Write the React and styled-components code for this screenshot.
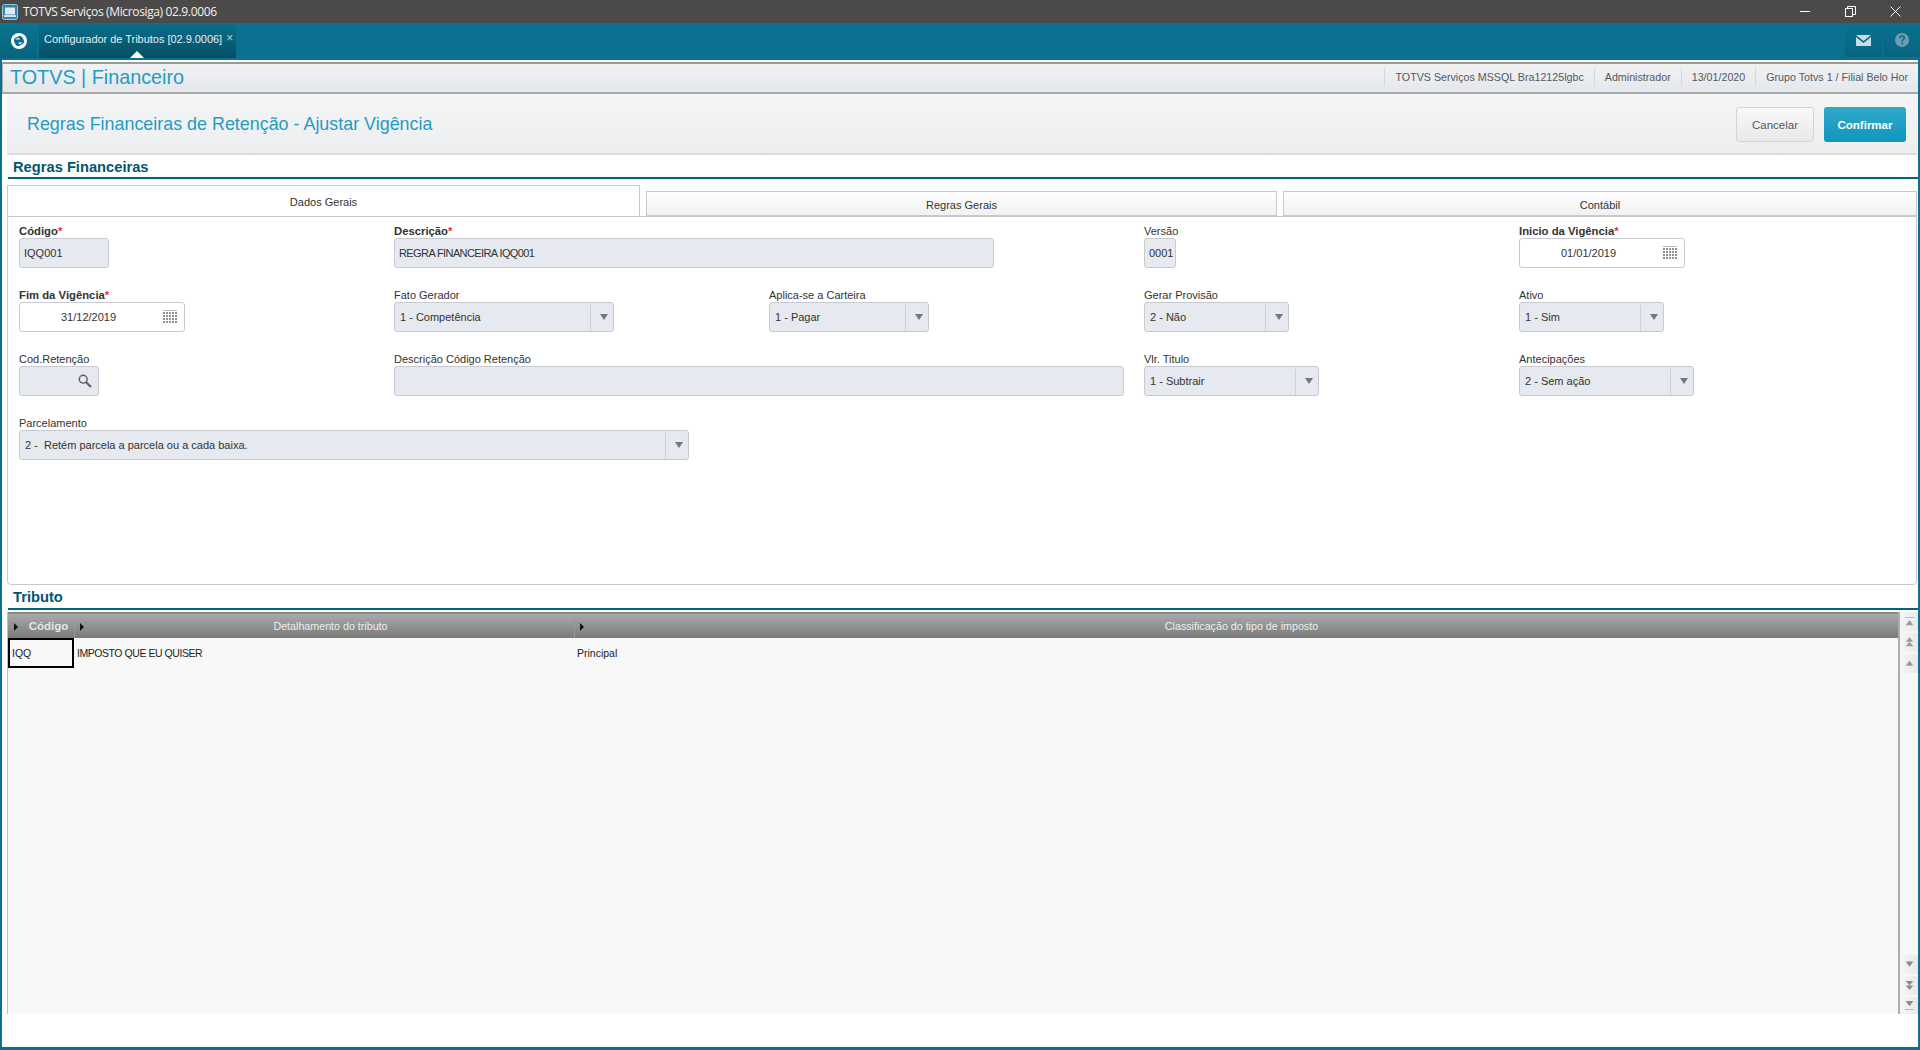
import React from 'react';
import styled, { createGlobalStyle } from 'styled-components';

const Global = createGlobalStyle`
  html, body { margin: 0; padding: 0; background: #fff; }
  body { font-family: "Liberation Sans", Arial, sans-serif; overflow: hidden; }
  * { box-sizing: border-box; }
`;

const Shell = styled.div`
  width: 1920px; height: 1050px; display: flex; flex-direction: column; background: #fff;
`;
const TitleBar = styled.div`
  height: 23px; flex: none; background: #4c4a48; display: flex; align-items: center; padding-left: 2px;
`;
const WinTitle = styled.span`
  margin-left: 5px; flex: 1; color: #f2f2f2; font: 12px "Open Sans", sans-serif; letter-spacing: -.36px;
`;
const WinButton = styled.div`
  width: 15px; height: 15px; display: flex; align-items: center; justify-content: center; margin-right: 30px;
  &:last-child { margin-right: 17px; }
`;
const TopBar = styled.div`
  height: 37px; flex: none; background: #0b7190; display: flex; align-items: flex-start;
`;
const LogoBtn = styled.div`
  width: 37px; height: 35px; display: flex; align-items: center; justify-content: center;
  background: linear-gradient(#0a7592, #08637d);
`;
const AppTab = styled.div`
  position: relative; width: 197px; height: 35px; margin-left: 2px; padding-left: 5px;
  display: flex; align-items: center; color: #e6eef1; font-size: 10.95px; padding-bottom: 3px; white-space: nowrap;
  background: linear-gradient(#0a6f8b, #054f66);
  &::after {
    content: ""; position: absolute; left: 91px; bottom: 0;
    border-left: 7px solid transparent; border-right: 7px solid transparent; border-bottom: 7px solid #fff;
  }
`;
const TabClose = styled.span`
  margin-left: 4px; color: #b8cfd8; font-size: 12px; line-height: 12px; margin-top: -2px;
`;
const Spacer = styled.div`flex: 1;`;
const TopIcon = styled.div`
  width: 37px; height: 34px; margin-left: 1px; display: flex; align-items: center; justify-content: center;
  background: linear-gradient(#0a7290, #08647f);
`;
const Body = styled.div`
  flex: 1; display: flex; flex-direction: column; min-height: 0;
  border-left: 2px solid #0b7190; border-right: 2px solid #0b7190; border-bottom: 3px solid #0b7190;
`;
const InfoBar = styled.div`
  margin-top: 2px; height: 32px; flex: none; display: flex; align-items: center; justify-content: flex-end;
  background: linear-gradient(#f1f2f4, #e4e7eb);
  border-top: 2px solid #9a9a9a; border-bottom: 2px solid #a8a8a8; border-left: 1px solid #aaa;
  padding: 0 10px 2px 0;
`;
const Brand = styled.div`
  flex: 1; padding-left: 7px; color: #1f9cc6; font-size: 19.8px; line-height: 24px;
`;
const InfoItem = styled.div`
  height: 18px; display: flex; align-items: center; color: #55585c; font-size: 10.7px;
  padding: 0 10px; border-left: 1px solid #d5d8dc;
  &:first-of-type { padding-left: 15px; }
  &:last-child { padding-right: 0; }
`;
const PageHeader = styled.div`
  margin-left: 5px; margin-right: 1px; height: 61px; flex: none; display: flex; align-items: center;
  padding: 1px 11px 0 20px; background: linear-gradient(#f4f5f5, #eceef0); border-bottom: 2px solid #dcdddf;
`;
const PageTitle = styled.h1`
  flex: 1; margin: 0; font-weight: normal; font-size: 17.9px; color: #1f9cc6;
`;
const CancelButton = styled.button`
  width: 78px; height: 35px; border: 1px solid #d4d4d4; border-radius: 3px; margin-right: 10px; padding: 2px 0 0;
  background: linear-gradient(#f8f8f8, #e9e9e9); color: #55585c; font: 11.5px "Liberation Sans", sans-serif;
`;
const ConfirmButton = styled.button`
  width: 82px; height: 35px; border: 0; border-radius: 3px; padding: 2px 0 0;
  background: linear-gradient(#32a8c9, #0f97bd); color: #fff; font: bold 11.5px "Liberation Sans", sans-serif;
`;
const SectionHead = styled.div`
  margin-left: 6px; height: ${p => p.$h}px; flex: none; display: flex; align-items: flex-end;
  padding: 0 0 ${p => p.$pb}px 5px; border-bottom: 2px solid #00657c; color: #00566f; font-weight: bold; font-size: 14.7px; line-height: 17px;
`;
const TabRow = styled.div`
  margin: 7px 0 0 5px; height: 30px; flex: none; display: flex; align-items: flex-end; gap: 6px;
`;
const Tab = styled.div`
  width: ${p => p.$w}px; height: ${p => (p.$active ? 31 : 25)}px; position: relative; z-index: ${p => (p.$active ? 1 : 0)};
  display: flex; align-items: center; justify-content: center; color: #333; font-size: 11px;
  padding-top: 2px;
  border: 1px solid #c9c9c9; border-bottom: ${p => (p.$active ? '0' : '1px solid #c9c9c9')};
  background: ${p => (p.$active ? '#fff' : 'linear-gradient(#fff, #f1f1f1)')};
`;
const Panel = styled.div`
  margin-left: 5px; margin-right: 1px; height: 369px; flex: none; padding: 7px 0 0 11px;
  border: 1px solid #c9c9c9; border-radius: 0 0 4px 4px;
`;
const FormGrid = styled.div`
  display: grid; grid-template-columns: repeat(5, 375px); row-gap: 20px;
`;
const Field = styled.div`
  grid-column: ${p => p.$col} / span ${p => p.$span || 1}; grid-row: ${p => p.$row};
`;
const Label = styled.div`
  height: 14px; line-height: 15px; font-size: ${p => (p.$req ? 11.3 : 11)}px; color: #333; font-weight: ${p => (p.$req ? 'bold' : 'normal')};
  white-space: nowrap;
`;
const Star = styled.span`color: #e0313f;`;
const Box = styled.div`
  width: ${p => p.$w}px; height: 30px; display: flex; align-items: center; font-size: 11px; color: #333;
  border: 1px solid #c7cbd1; border-radius: 3px; background: ${p => (p.$white ? '#fff' : '#e6e9f0')};
  padding-left: 4px; position: relative; letter-spacing: ${p => (p.$tight ? '-.6px' : '0')};
`;
const DateText = styled.span`flex: 1; text-align: center; padding-right: 10px;`;
const CalIcon = styled.span`margin-right: 6px; display: flex;`;
const SearchIcon = styled.span`margin-left: auto; margin-right: 6px; display: flex;`;
const SelectText = styled.span`flex: 1; padding-left: 1px; white-space: pre;`;
const SelectArrow = styled.span`
  width: 23px; height: 26px; margin: 2px 0 0; flex: none; display: flex; align-items: center; justify-content: center;
  border-left: 1px solid #cdd0d6; padding-left: 3px;
  &::after {
    content: ""; margin-top: -2px; border-left: 4px solid transparent; border-right: 4px solid transparent; border-top: 6px solid #73777d;
  }
`;
const GridWrap = styled.div`
  margin: 2px 0 0 5px; height: 402px; flex: none; display: flex; border-left: 1px solid #c0c0c0;
`;
const TableArea = styled.div`
  flex: 1; display: flex; flex-direction: column; background: #f8f8f8;
`;
const GridCols = styled.div`
  display: grid; grid-template-columns: 66px 500px 1fr;
`;
const HeadRow = styled(GridCols)`
  height: 26px; border-top: 2px solid #8a8a8a;
`;
const HeadCell = styled.div`
  position: relative; display: flex; align-items: center; justify-content: center;
  background: linear-gradient(#aaaaaa, #7a7a7a); border-left: 1px solid ${p => (p.$first ? 'transparent' : '#999')};
  color: #eeeeee; font-size: 10.7px; font-weight: ${p => (p.$bold ? 'bold' : 'normal')};
  padding-left: ${p => p.$pl || 0}px;
  ${p => p.$bold && 'font-size: 11.5px; color:#e6e6e6;'}
  &::before {
    content: ""; position: absolute; left: 5px; top: 9px;
    border-top: 4px solid transparent; border-bottom: 4px solid transparent; border-left: 4px solid #111;
  }
`;
const DataCell = styled.div`
  height: 30px; display: flex; align-items: center; font-size: 10.5px; color: #222; padding-left: 3px;
  letter-spacing: ${p => (p.$tight ? '-.45px' : '0')};
  ${p => p.$sel && 'border: 2px solid #000; padding-left: 2px;'}
`;
const Rail = styled.div`
  width: 20px; flex: none; display: flex; flex-direction: column; justify-content: space-between;
  border-left: 2px solid #adadad; background: #f6f7f9;
`;
const RailGroup = styled.div`display: flex; flex-direction: column; gap: 2px;`;
const RailBtn = styled.div`
  height: ${p => p.$h || 19}px; display: flex; align-items: center; justify-content: center;
  background: linear-gradient(90deg, #f5f5f6, #e8e9ec); border-radius: 2px 2px 0 0;
`;

const GridIcon = () => (
  <svg width="15" height="14" viewBox="0 0 15 14">
    {[0, 3, 6, 9, 12].map(x => [2, 5, 8, 11].map(y => (
      <rect key={`${x}-${y}`} x={x} y={y} width="2" height="2" fill="#8f9296" />
    )))}
    <rect x="0" y="0" width="14" height="1" fill="#b4b7ba" />
  </svg>
);

const Tri = ({ dir }) => (
  <svg width="9" height="11" viewBox="0 0 12 14">
    {dir === 'up' && <path d="M6 3 L11 10 L1 10 Z" fill="#9a9a9a" />}
    {dir === 'up2' && <><path d="M6 0 L11 6 L1 6 Z" fill="#9a9a9a" /><path d="M6 6 L11 12 L1 12 Z" fill="#9a9a9a" /></>}
    {dir === 'upbar' && <><rect x="0" y="1" width="12" height="1" fill="#a8a8a8" /><path d="M6 5 L11 12 L1 12 Z" fill="#9a9a9a" /></>}
    {dir === 'down' && <path d="M1 3 L11 3 L6 10 Z" fill="#8a8a8a" />}
    {dir === 'down2' && <><path d="M1 1 L11 1 L6 7 Z" fill="#8a8a8a" /><path d="M1 7 L11 7 L6 13 Z" fill="#8a8a8a" /></>}
    {dir === 'downbar' && <><path d="M1 1 L11 1 L6 8 Z" fill="#8a8a8a" /><rect x="0" y="12" width="12" height="1" fill="#a8a8a8" /></>}
  </svg>
);

const Select = ({ w, children }) => (
  <Box $w={w}><SelectText>{children}</SelectText><SelectArrow /></Box>
);
const DateBox = ({ w, children }) => (
  <Box $w={w} $white><DateText>{children}</DateText><CalIcon><GridIcon /></CalIcon></Box>
);
const F = ({ row, col, span, label, req, children }) => (
  <Field $row={row} $col={col} $span={span}>
    <Label $req={req}>{label}{req && <Star>*</Star>}</Label>
    {children}
  </Field>
);

export default function App() {
  return (
    <Shell>
      <Global />
      <TitleBar>
        <svg width="16" height="16" viewBox="0 0 16 16">
          <rect x=".5" y=".5" width="15" height="15" rx="2" fill="#2f87ad" stroke="#9fc4d3" />
          <rect x="3" y="3.5" width="10" height="7" fill="#dfeaf0" />
          <rect x="2" y="11" width="12" height="2" fill="#cfe0e8" />
        </svg>
        <WinTitle>TOTVS Serviços (Microsiga) 02.9.0006</WinTitle>
        <WinButton>
          <svg width="11" height="11" viewBox="0 0 11 11"><path d="M0 5.5H10" stroke="#fff" /></svg>
        </WinButton>
        <WinButton>
          <svg width="11" height="11" viewBox="0 0 11 11" fill="none" stroke="#fff">
            <rect x=".5" y="2.5" width="7" height="8" /><path d="M2.5 2.5V.5H10.5V8.5H7.5" />
          </svg>
        </WinButton>
        <WinButton>
          <svg width="11" height="11" viewBox="0 0 11 11"><path d="M.5.5L10.5 10.5M10.5.5L.5 10.5" stroke="#fff" /></svg>
        </WinButton>
      </TitleBar>
      <TopBar>
        <LogoBtn>
          <svg width="16" height="16" viewBox="0 0 16 16">
            <circle cx="8" cy="8" r="8" fill="#fff" />
            <rect x="3.4" y="3.6" width="9.2" height="8.8" rx="3" fill="#0a6f8b" transform="rotate(-25 8 8)" />
            <path d="M4 6.4L7.4 4.8L9.2 6.6Z" fill="#fff" />
            <path d="M12 9.6L8.6 11.2L6.8 9.4Z" fill="#fff" />
          </svg>
        </LogoBtn>
        <AppTab>
          Configurador de Tributos [02.9.0006]<TabClose>×</TabClose>
        </AppTab>
        <Spacer />
        <TopIcon>
          <svg width="15" height="11" viewBox="0 0 15 11">
            <path d="M0 0H15L7.5 6Z" fill="#c9dde4" /><path d="M0 2L7.5 8L15 2V11H0Z" fill="#c9dde4" />
          </svg>
        </TopIcon>
        <TopIcon>
          <svg width="14" height="14" viewBox="0 0 14 14">
            <circle cx="7" cy="7" r="7" fill="#6c9db0" />
            <path d="M4.8 5.2C4.8 3.8 5.8 3 7 3S9.3 3.8 9.3 5C9.3 6.5 7.2 6.6 7.2 8.2" stroke="#0a6a86" strokeWidth="1.6" fill="none" />
            <rect x="6.3" y="9.4" width="1.8" height="1.8" fill="#0a6a86" />
          </svg>
        </TopIcon>
      </TopBar>
      <Body>
        <InfoBar>
          <Brand>TOTVS | Financeiro</Brand>
          <InfoItem>TOTVS Serviços MSSQL Bra12125lgbc</InfoItem>
          <InfoItem>Administrador</InfoItem>
          <InfoItem>13/01/2020</InfoItem>
          <InfoItem>Grupo Totvs 1 / Filial Belo Hor</InfoItem>
        </InfoBar>
        <PageHeader>
          <PageTitle>Regras Financeiras de Retenção - Ajustar Vigência</PageTitle>
          <CancelButton>Cancelar</CancelButton>
          <ConfirmButton>Confirmar</ConfirmButton>
        </PageHeader>
        <SectionHead $h={24} $pb={1}>Regras Financeiras</SectionHead>
        <TabRow>
          <Tab $active $w={633}>Dados Gerais</Tab>
          <Tab $w={631}>Regras Gerais</Tab>
          <Tab $w={634}>Contábil</Tab>
        </TabRow>
        <Panel>
          <FormGrid>
            <F row={1} col={1} label="Código" req><Box $w={90}>IQQ001</Box></F>
            <F row={1} col={2} span={2} label="Descrição" req><Box $w={600} $tight>REGRA FINANCEIRA IQQ001</Box></F>
            <F row={1} col={4} label="Versão"><Box $w={32}>0001</Box></F>
            <F row={1} col={5} label="Inicio da Vigência" req><DateBox w={166}>01/01/2019</DateBox></F>

            <F row={2} col={1} label="Fim da Vigência" req><DateBox w={166}>31/12/2019</DateBox></F>
            <F row={2} col={2} label="Fato Gerador"><Select w={220}>1 - Competência</Select></F>
            <F row={2} col={3} label="Aplica-se a Carteira"><Select w={160}>1 - Pagar</Select></F>
            <F row={2} col={4} label="Gerar Provisão"><Select w={145}>2 - Não</Select></F>
            <F row={2} col={5} label="Ativo"><Select w={145}>1 - Sim</Select></F>

            <F row={3} col={1} label="Cod.Retenção">
              <Box $w={80}>
                <SearchIcon>
                  <svg width="14" height="14" viewBox="0 0 14 14" fill="none">
                    <circle cx="5.2" cy="5.2" r="3.9" stroke="#5f6266" strokeWidth="1.5" />
                    <path d="M8.2 8.2L13 13" stroke="#5f6266" strokeWidth="2.2" />
                  </svg>
                </SearchIcon>
              </Box>
            </F>
            <F row={3} col={2} span={2} label="Descrição Código Retenção"><Box $w={730} /></F>
            <F row={3} col={4} label="Vlr. Titulo"><Select w={175}>1 - Subtrair</Select></F>
            <F row={3} col={5} label="Antecipações"><Select w={175}>2 - Sem ação</Select></F>

            <F row={4} col={1} span={2} label="Parcelamento">
              <Select w={670}>2 -  Retém parcela a parcela ou a cada baixa.</Select>
            </F>
          </FormGrid>
        </Panel>
        <SectionHead $h={25} $pb={2}>Tributo</SectionHead>
        <GridWrap>
          <TableArea>
            <HeadRow>
              <HeadCell $bold $first $pl={14}>Código</HeadCell>
              <HeadCell $pl={12}>Detalhamento do tributo</HeadCell>
              <HeadCell $pl={10}>Classificação do tipo de imposto</HeadCell>
            </HeadRow>
            <GridCols>
              <DataCell $sel>IQQ</DataCell>
              <DataCell $tight>IMPOSTO QUE EU QUISER</DataCell>
              <DataCell>Principal</DataCell>
            </GridCols>
          </TableArea>
          <Rail>
            <RailGroup>
              <RailBtn><Tri dir="upbar" /></RailBtn>
              <RailBtn><Tri dir="up2" /></RailBtn>
              <RailBtn><Tri dir="up" /></RailBtn>
            </RailGroup>
            <RailGroup>
              <RailBtn><Tri dir="down" /></RailBtn>
              <RailBtn><Tri dir="down2" /></RailBtn>
              <RailBtn $h={17}><Tri dir="downbar" /></RailBtn>
            </RailGroup>
          </Rail>
        </GridWrap>
      </Body>
    </Shell>
  );
}
